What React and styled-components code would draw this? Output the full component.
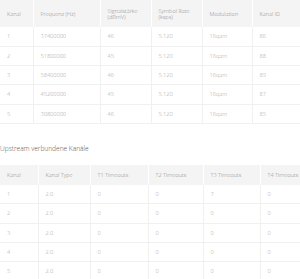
import React from "react";
import styled, { createGlobalStyle } from "styled-components";

const Global = createGlobalStyle`
  html, body { margin: 0; padding: 0; background: #fff; }
  body { font-family: "Open Sans", "Liberation Sans", sans-serif; }
  *, *::before, *::after { box-sizing: border-box; }
`;

const Page = styled.div`
  width: 300px;
  height: 279px;
  overflow: hidden;
`;

const Table = styled.table`
  width: 300px;
  table-layout: fixed;
  border-collapse: collapse;
  font-size: 5.6px;
  font-weight: 300;
`;

const Th = styled.th`
  width: ${(p) => p.$w}px;
  background: #f4f4f4;
  color: #8a8a8a;
  font-weight: 300;
  text-align: left;
  line-height: 6.5px;
  white-space: nowrap;
  padding: ${(p) => (p.$tall ? "7.8px 7px 6.6px" : "7.2px 7px 6.4px")};
  border-right: 1px solid #fff;
  &:last-child { border-right: none; }
`;

const Td = styled.td`
  color: #a3a3a3;
  text-align: left;
  line-height: 7px;
  padding: 6px 7px 5.3px;
  border-bottom: 1px solid #f0f0f0;
  border-right: 1px solid #f0f0f0;
  &:last-child { border-right: none; }
`;

const Heading = styled.h3`
  margin: 20px 0 11px;
  font-size: 6.6px;
  line-height: 10px;
  font-weight: 300;
  color: #555;
`;

const down = {
  cols: [
    ["Kanal", 33],
    ["Frequenz (Hz)", 67],
    ["Signalstärke\n(dBmV)", 51],
    ["Symbol Rate\n(ksps)", 51],
    ["Modulation", 50],
    ["Kanal ID", 48],
  ],
  rows: [
    ["1", "37400000", "46", "5.120", "16qam", "86"],
    ["2", "51800000", "45", "5.120", "16qam", "88"],
    ["3", "58400000", "46", "5.120", "16qam", "89"],
    ["4", "45200000", "45", "5.120", "16qam", "87"],
    ["5", "30800000", "46", "5.120", "16qam", "85"],
  ],
};

const up = {
  cols: [
    ["Kanal", 38],
    ["Kanal Type", 52],
    ["T1 Timeouts", 58],
    ["T2 Timeouts", 55],
    ["T3 Timeouts", 57],
    ["T4 Timeouts", 40],
  ],
  rows: [
    ["1", "2.0", "0", "0", "7", "0"],
    ["2", "2.0", "0", "0", "0", "0"],
    ["3", "2.0", "0", "0", "0", "0"],
    ["4", "2.0", "0", "0", "0", "0"],
    ["5", "2.0", "0", "0", "0", "0"],
  ],
};

function DataTable({ data, tall }) {
  return (
    <Table>
      <thead>
        <tr>
          {data.cols.map(([label, w]) => (
            <Th key={label} $w={w} $tall={tall}>
              {label.split("\n").map((part, i) => (
                <React.Fragment key={i}>
                  {i > 0 && <br />}
                  {part}
                </React.Fragment>
              ))}
            </Th>
          ))}
        </tr>
      </thead>
      <tbody>
        {data.rows.map((r, i) => (
          <tr key={i}>
            {r.map((c, j) => (
              <Td key={j}>{c}</Td>
            ))}
          </tr>
        ))}
      </tbody>
    </Table>
  );
}

export default function App() {
  return (
    <Page>
      <Global />
      <DataTable data={down} tall />
      <Heading>Upstream verbundene Kanäle</Heading>
      <DataTable data={up} />
    </Page>
  );
}
